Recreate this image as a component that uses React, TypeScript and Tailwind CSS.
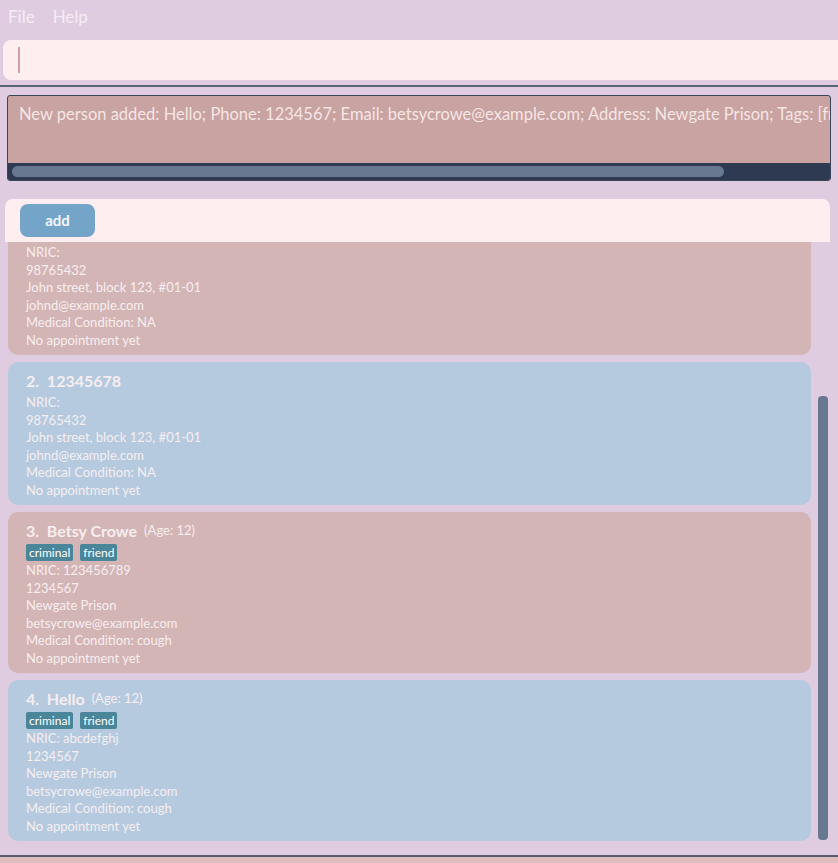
import { FC } from 'react';

interface Person {
  index: number;
  name: string;
  age?: number;
  tags: string[];
  nric: string;
  phone: string;
  address: string;
  email: string;
  condition: string;
}

const people: Person[] = [
  { index: 1, name: 'John Doe', tags: [], nric: '', phone: '98765432', address: 'John street, block 123, #01-01', email: 'johnd@example.com', condition: 'NA' },
  { index: 2, name: '12345678', tags: [], nric: '', phone: '98765432', address: 'John street, block 123, #01-01', email: 'johnd@example.com', condition: 'NA' },
  { index: 3, name: 'Betsy Crowe', age: 12, tags: ['criminal', 'friend'], nric: '123456789', phone: '1234567', address: 'Newgate Prison', email: 'betsycrowe@example.com', condition: 'cough' },
  { index: 4, name: 'Hello', age: 12, tags: ['criminal', 'friend'], nric: 'abcdefghj', phone: '1234567', address: 'Newgate Prison', email: 'betsycrowe@example.com', condition: 'cough' },
];

const PersonCard: FC<{ person: Person }> = ({ person }) => {
  const isPink = person.index % 2 === 1;
  return (
    <div
      className={
        isPink
          ? 'shrink-0 rounded-[10px] bg-[#d4b5b5] pl-[18px] pt-[8px] pb-[6px] text-[#f6eef0]'
          : 'shrink-0 rounded-[10px] bg-[#b5cadf] pl-[18px] pt-[8px] pb-[6px] text-[#f6eef0]'
      }
    >
      <div className="h-[22px] mb-[2px] flex items-center gap-[7px]">
        <span className="text-[16px] font-bold">
          {person.index}.&nbsp;&nbsp;{person.name}
        </span>
        {person.age !== undefined && <span className="text-[13px]">(Age: {person.age})</span>}
      </div>
      {person.tags.length > 0 && (
        <div className="h-[18px] -mt-[1px] mb-[1px] flex items-center gap-[7px]">
          {person.tags.map(tag => (
            <span key={tag} className="h-[17px] px-[3px] rounded-[2px] bg-[#4a8599] text-[12px] leading-[17px] text-white">
              {tag}
            </span>
          ))}
        </div>
      )}
      <div className="text-[13px] leading-[17.5px]">
        <div>NRIC: {person.nric}</div>
        <div>{person.phone}</div>
        <div>{person.address}</div>
        <div>{person.email}</div>
        <div>Medical Condition: {person.condition}</div>
        <div>No appointment yet</div>
      </div>
    </div>
  );
};

const App: FC = () => {
  return (
    <div className="w-[838px] h-[863px] bg-[#dfcce0] flex flex-col overflow-hidden font-['Lato',sans-serif]">
      <div className="h-[34px] shrink-0 flex items-center gap-[18px] px-[8px] text-[17px] text-[#f4ecf4]">
        <span>File</span>
        <span>Help</span>
      </div>

      <div className="mt-[6px] ml-[3px] h-[40px] shrink-0 rounded-l-[8px] bg-[#ffeef0] flex items-center pl-[15px]">
        <div className="w-[2px] h-[26px] bg-[#d49ca8]" />
      </div>

      <div className="mt-[5px] h-[2px] shrink-0 bg-[#5c6478]" />

      <div className="mt-[8px] mx-[7px] h-[86px] shrink-0 border border-[#3c4458] rounded-[3px] bg-[#c9a2a2] flex flex-col overflow-hidden">
        <div className="flex-1 px-[11px] pt-[6px] text-[16.5px] text-[#f5e6e4] whitespace-nowrap overflow-hidden">
          New person added: Hello; Phone: 1234567; Email: betsycrowe@example.com; Address: Newgate Prison; Tags: [friend][criminal]
        </div>
        <div className="h-[17px] bg-[#2e3a52] px-[4px] py-[3px]">
          <div className="w-[712px] h-full rounded-full bg-[#677890]" />
        </div>
      </div>

      <div className="mt-[18px] ml-[5px] mr-[8px] h-[43px] shrink-0 rounded-t-[8px] bg-[#ffeef0] flex items-center pl-[15px]">
        <button className="w-[75px] h-[33px] rounded-[8px] bg-[#74a5c9] text-[15px] font-bold text-[#f4f6fa]">
          add
        </button>
      </div>

      <div className="flex-1 flex overflow-hidden">
        <div className="w-[803px] ml-[8px] -mt-[30px] flex flex-col gap-[7px]">
          {people.map(p => (
            <PersonCard key={p.index} person={p} />
          ))}
        </div>
        <div className="ml-[7px] mt-[154px] w-[10px] h-[444px] rounded-[4px] bg-[#687890]" />
      </div>

      <div className="h-[2px] shrink-0 bg-[#595a70]" />
      <div className="h-[6px] shrink-0 bg-[#dcbcbc]" />
    </div>
  );
};

export default App;
